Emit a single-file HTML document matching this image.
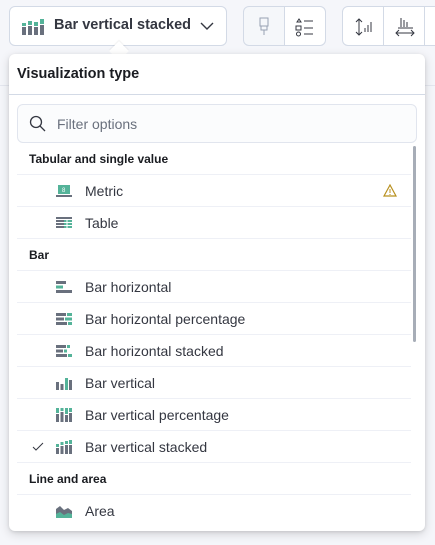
<!DOCTYPE html>
<html><head><style>
*{box-sizing:border-box;margin:0;padding:0}
body{width:435px;height:545px;background:#f5f6fa;font-family:"Liberation Sans",sans-serif;position:relative;overflow:hidden;color:#343741}
.btn{position:absolute;border:1px solid #d3dae6;border-radius:6px;background:#fff}
.pop{position:absolute;left:9px;top:54px;width:416px;height:477px;background:#fff;border-radius:6px;box-shadow:0 3px 10px rgba(0,0,0,.15),0 1px 3px rgba(0,0,0,.1)}
.row{position:absolute;left:8px;width:394px;height:32px;border-bottom:1px solid #eef0f6;font-size:14px;line-height:32px}
.h{font-weight:bold;font-size:12px;padding-left:12px;color:#1a1c21}
.it{padding-left:68px;color:#343741}
.ic{position:absolute;left:39px;top:9px}
</style></head><body>
<div class="btn" style="left:9px;top:6px;width:218px;height:40px">
<svg style="position:absolute;left:12px;top:12px" width="22" height="16"><rect x="0" y="8" width="4" height="8" fill="#69707d"/><rect x="0" y="4" width="4" height="3" fill="#54b399"/><rect x="6" y="7" width="4" height="9" fill="#69707d"/><rect x="6" y="2" width="4" height="4" fill="#54b399"/><rect x="12" y="8" width="4" height="8" fill="#69707d"/><rect x="12" y="3" width="4" height="4" fill="#54b399"/><rect x="18" y="6" width="4" height="10" fill="#69707d"/><rect x="18" y="0" width="4" height="5" fill="#54b399"/></svg>
<span style="position:absolute;left:44px;top:10px;font-size:14.5px;font-weight:bold;color:#343741">Bar vertical stacked</span>
<svg style="position:absolute;left:190px;top:14px" width="14" height="10"><path d="M1 2l6 6 6-6" stroke="#343741" stroke-width="1.4" fill="none"/></svg>
</div>
<div class="btn" style="left:243px;top:6px;width:83px;height:40px;background:#f5f7fa"><div style="position:absolute;left:40px;top:0;width:1px;height:38px;background:#d3dae6"></div><div style="position:absolute;left:41px;top:0;width:40px;height:38px;background:#fff;border-radius:0 6px 6px 0"></div>
<svg style="position:absolute;left:13px;top:10px" width="14" height="20"><rect x="3" y="1" width="8" height="8" fill="none" stroke="#98a2b3"/><path d="M4 9v4h6V9M7 13v5" stroke="#98a2b3" fill="none"/></svg>
<svg style="position:absolute;left:51px;top:10px" width="20" height="20"><path d="M2 5l2-3 2 3zM1 9h5v4H1zM3.5 17m-2 0a2 2 0 104 0a2 2 0 10-4 0M9 4h9M9 11h9M9 17h9" stroke="#343741" fill="none"/></svg></div>
<div class="btn" style="left:342px;top:6px;width:110px;height:40px"><div style="position:absolute;left:40px;top:0;width:1px;height:38px;background:#d3dae6"></div><div style="position:absolute;left:81px;top:0;width:1px;height:38px;background:#d3dae6"></div>
<svg style="position:absolute;left:12px;top:10px" width="18" height="20"><path d="M4 2v16M1 5l3-3 3 3M1 15l3 3 3-3M10 15v-4M13 15V8M16 15V5" stroke="#343741" fill="none"/></svg>
<svg style="position:absolute;left:52px;top:10px" width="20" height="20"><path d="M6 1v9M9 3v7M12 5v5M3 11h15M1 16h18M4 13l-3 3 3 3M16 13l3 3-3 3" stroke="#343741" fill="none"/></svg></div>
<div style="position:absolute;left:0;top:85px;width:435px;height:1px;background:#e4e7ef"></div>
<div style="position:absolute;left:112px;top:44px;width:14px;height:14px;background:#fff;transform:rotate(45deg);box-shadow:-1px -1px 1px rgba(0,0,0,.05)"></div>
<div class="pop">
<div style="position:absolute;left:8px;top:12px;font-size:14.5px;font-weight:bold;color:#1a1c21">Visualization type</div>
<div style="position:absolute;left:0;top:40px;width:416px;height:1px;background:#d3dae6"></div>
<div style="position:absolute;left:8px;top:50px;width:400px;height:39px;background:#fbfcfd;border:1px solid #e1e5ee;border-radius:6px">
<svg style="position:absolute;left:11px;top:10px" width="18" height="18"><circle cx="7" cy="7" r="5.5" stroke="#343741" stroke-width="1.3" fill="none"/><path d="M11 11l5 5" stroke="#343741" stroke-width="1.3"/></svg>
<span style="position:absolute;left:39px;top:11px;font-size:14px;color:#69707d">Filter options</span></div>
<div style="position:absolute;left:404px;top:92px;width:3px;height:196px;background:#a7adb7;border-radius:2px"></div>
<div class="row h" style="top:89px">Tabular and single value</div>
<div class="row it" style="top:121px"><svg class="ic" width="16" height="14"><rect x="2" y="1" width="12" height="9" fill="#54b399"/><rect x="0" y="11" width="16" height="2" fill="#69707d"/><text x="6" y="8" font-size="6" fill="#fff">8</text></svg>Metric
<svg style="position:absolute;left:366px;top:9px" width="14" height="13"><path d="M7 1L1 12h12z" stroke="#b8901f" stroke-width="1.2" fill="none"/><path d="M7 5v4M7 10v1" stroke="#b8901f"/></svg></div>
<div class="row it" style="top:153px"><svg class="ic" width="16" height="14"><path d="M0 2h16M0 5h16M0 8h16M0 11h16" stroke="#69707d" stroke-width="2"/><path d="M8 5h8M8 8h8M8 11h8" stroke="#54b399" stroke-width="2"/><path d="M11 4v9" stroke="#fff"/></svg>Table</div>
<div class="row h" style="top:185px">Bar</div>
<div class="row it" style="top:217px"><svg class="ic" width="16" height="14"><rect x="0" y="1" width="10" height="3" fill="#69707d"/><rect x="0" y="5.5" width="7" height="3" fill="#54b399"/><rect x="0" y="10" width="16" height="3" fill="#69707d"/></svg>Bar horizontal</div>
<div class="row it" style="top:249px"><svg class="ic" width="16" height="14"><rect x="0" y="1" width="10" height="3" fill="#69707d"/><rect x="11" y="1" width="5" height="3" fill="#54b399"/><rect x="0" y="5.5" width="8" height="3" fill="#69707d"/><rect x="9" y="5.5" width="7" height="3" fill="#54b399"/><rect x="0" y="10" width="11" height="3" fill="#69707d"/><rect x="12" y="10" width="4" height="3" fill="#54b399"/></svg>Bar horizontal percentage</div>
<div class="row it" style="top:281px"><svg class="ic" width="16" height="14"><rect x="0" y="1" width="10" height="3" fill="#69707d"/><rect x="11" y="1" width="3" height="3" fill="#54b399"/><rect x="0" y="5.5" width="7" height="3" fill="#69707d"/><rect x="8" y="5.5" width="3" height="3" fill="#54b399"/><rect x="0" y="10" width="11" height="3" fill="#69707d"/><rect x="12" y="10" width="4" height="3" fill="#54b399"/></svg>Bar horizontal stacked</div>
<div class="row it" style="top:313px"><svg class="ic" width="16" height="14"><rect x="0" y="6" width="3" height="8" fill="#69707d"/><rect x="4.5" y="8" width="3" height="6" fill="#69707d"/><rect x="9" y="2" width="3" height="12" fill="#54b399"/><rect x="13" y="4" width="3" height="10" fill="#69707d"/></svg>Bar vertical</div>
<div class="row it" style="top:345px"><svg class="ic" width="16" height="14"><g fill="#54b399"><rect x="0" y="0" width="3" height="5"/><rect x="4.5" y="0" width="3" height="3"/><rect x="9" y="0" width="3" height="6"/><rect x="13" y="0" width="3" height="4"/></g><g fill="#69707d"><rect x="0" y="6" width="3" height="8"/><rect x="4.5" y="4" width="3" height="10"/><rect x="9" y="7" width="3" height="7"/><rect x="13" y="5" width="3" height="9"/></g></svg>Bar vertical percentage</div>
<div class="row it" style="top:377px"><svg style="position:absolute;left:15px;top:11px" width="12" height="10"><path d="M1 5l3 3 7-7" stroke="#343741" fill="none"/></svg><svg class="ic" width="16" height="14"><g fill="#54b399"><rect x="0" y="4" width="3" height="3"/><rect x="4.5" y="2" width="3" height="3"/><rect x="9" y="1" width="3" height="3"/><rect x="13" y="0" width="3" height="4"/></g><g fill="#69707d"><rect x="0" y="8" width="3" height="6"/><rect x="4.5" y="6" width="3" height="8"/><rect x="9" y="5" width="3" height="9"/><rect x="13" y="5" width="3" height="9"/></g></svg>Bar vertical stacked</div>
<div class="row h" style="top:409px">Line and area</div>
<div class="row it" style="top:441px;border:none"><svg class="ic" width="16" height="14"><path d="M0 14V5l4-3 4 4 4-2 4 3v7z" fill="#69707d"/><path d="M0 14V10l4-2 4 3 4-2 4 1v4z" fill="#54b399"/></svg>Area</div>
</div>
</body></html>
